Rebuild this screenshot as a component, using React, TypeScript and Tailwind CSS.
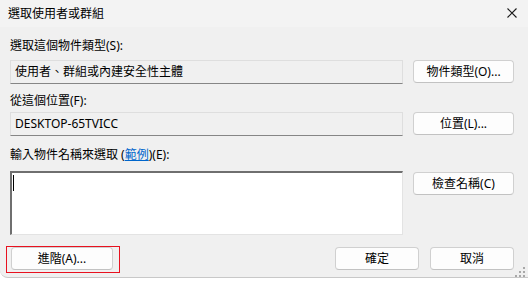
import React from 'react';

const font = { fontFamily: '"Noto Sans", "Noto Sans CJK TC", sans-serif' };

function DlgButton({ children, className = '' }: { children: React.ReactNode; className?: string }) {
  return (
    <button
      type="button"
      className={`flex h-[23px] items-center justify-center rounded-[4px] border border-[#d0d0d0] border-b-[#c2c2c2] bg-[#fdfdfd] text-[12px] leading-none text-black ${className}`}
    >
      {children}
    </button>
  );
}

function ReadField({ value }: { value: string }) {
  return (
    <div className="flex h-[24px] w-[393px] items-center border border-[#dedede] border-b-[#868686] bg-[#f0f0f0] pl-[4px] text-[12px] text-black">
      {value}
    </div>
  );
}

export default function App() {
  return (
    <div className="relative h-[282px] w-[528px] overflow-hidden bg-white text-black" style={font}>
      <div className="flex h-[278px] flex-col rounded-bl-[8px] border-b border-[#c8c8c8] bg-[#f0f0f0]">
        {/* Title bar */}
        <div className="flex h-[27px] shrink-0 items-center justify-between bg-[#f3f3f3] pl-[8px] pr-[10px]">
          <span className="text-[12px] leading-none">選取使用者或群組</span>
          <svg width="10" height="10" viewBox="0 0 10 10" className="mr-[1px] mt-[-2px]">
            <path d="M0.5 0.5 L9.5 9.5 M9.5 0.5 L0.5 9.5" stroke="#1a1a1a" strokeWidth="1.1" />
          </svg>
        </div>

        {/* Body */}
        <div className="flex flex-col pl-[10px] pr-[14px] pt-[11px]">
          <div className="flex h-4 items-center text-[12px]">選取這個物件類型(S):</div>
          <div className="mt-[6px] flex items-start gap-[10px]">
            <ReadField value="使用者、群組或內建安全性主體" />
            <DlgButton className="w-[101px]">物件類型(O)...</DlgButton>
          </div>

          <div className="mt-[9px] flex h-4 items-center text-[12px]">從這個位置(F):</div>
          <div className="mt-[3px] flex items-start gap-[10px]">
            <ReadField value="DESKTOP-65TVICC" />
            <DlgButton className="w-[101px]">位置(L)...</DlgButton>
          </div>

          <div className="mt-[11px] flex h-4 items-center text-[12px]">
            輸入物件名稱來選取 (<span className="text-[#0066cc] underline">範例</span>)(E):
          </div>
          <div className="mt-[8px] flex items-start gap-[10px]">
            <div className="relative h-[64px] w-[393px] border-b border-l-2 border-r border-t-2 border-b-[#e3e3e3] border-l-[#6f6f6f] border-r-[#e3e3e3] border-t-[#6f6f6f] bg-white">
              <div className="absolute left-[1px] top-[2px] h-[16px] w-px bg-black" />
            </div>
            <DlgButton className="mt-[1px] w-[101px]">檢查名稱(C)</DlgButton>
          </div>

          <div className="mt-[12px] flex items-start">
            <div className="relative">
              <DlgButton className="ml-[1px] w-[102px]">進階(A)...</DlgButton>
              <div className="pointer-events-none absolute -left-[4px] -top-[1px] h-[27px] w-[114px] border border-[#e8111f]" />
            </div>
            <div className="ml-auto flex gap-[11px]">
              <DlgButton className="w-[84px]">確定</DlgButton>
              <DlgButton className="w-[84px]">取消</DlgButton>
            </div>
          </div>
        </div>

        {/* Resize grip */}
        <svg width="10" height="10" viewBox="0 0 10 10" className="absolute right-[3px] top-[267px]">
          <rect x="8" y="0" width="2" height="2" fill="#a8a8a8" />
          <rect x="4" y="4" width="2" height="2" fill="#a8a8a8" />
          <rect x="8" y="4" width="2" height="2" fill="#a8a8a8" />
          <rect x="0" y="8" width="2" height="2" fill="#a8a8a8" />
          <rect x="4" y="8" width="2" height="2" fill="#a8a8a8" />
          <rect x="8" y="8" width="2" height="2" fill="#a8a8a8" />
        </svg>
      </div>
    </div>
  );
}
